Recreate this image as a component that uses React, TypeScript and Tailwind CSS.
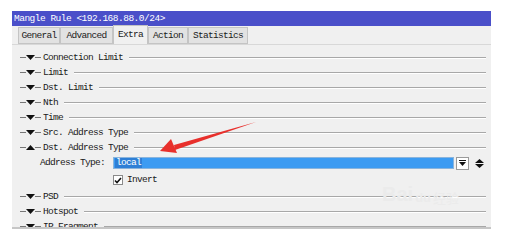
import React from "react";

const mono = { fontFamily: '"Liberation Mono", "DejaVu Sans Mono", monospace' };

const Tri = ({ up = false }: { up?: boolean }) => (
  <svg width="9" height="5" viewBox="0 0 9 5" className="block">
    {up ? <polygon points="0,5 9,5 4.5,0" fill="#111" /> : <polygon points="0,0 9,0 4.5,5" fill="#111" />}
  </svg>
);

const Section = ({ label, up = false }: { label: string; up?: boolean }) => (
  <div className="shrink-0 flex items-center h-[15px] pl-[8px] pr-[5px]">
    <div className="w-[6px] h-px bg-[#777]" />
    <Tri up={up} />
    <div className="w-[6px] h-px bg-[#777]" />
    <span className="ml-[2px] text-[9.5px] tracking-[-0.7px] text-[#1a1a1a] leading-none whitespace-nowrap">{label}</span>
    <div className="flex-1 ml-[6px] border-t border-t-[#a8a8a8] border-b border-b-white" />
  </div>
);

const tabs = [
  { name: "General", w: "w-[42px]" },
  { name: "Advanced", w: "w-[53px]" },
  { name: "Extra", w: "w-[35px]", active: true },
  { name: "Action", w: "w-[40px]" },
  { name: "Statistics", w: "w-[60px]" },
];

export default function App() {
  return (
    <div className="relative w-[507px] h-[244px] bg-white overflow-hidden" style={mono}>
      <div className="ml-[12px] mt-[11px] w-[479px] h-[218px] bg-[#f0f0f0] border-b-2 border-b-[#c6c6c6] flex flex-col overflow-hidden">
        <div className="shrink-0 h-[15px] bg-[#4a4fc9] flex items-center pl-[2px] text-white text-[9.5px] tracking-[-0.5px] leading-none">
          Mangle Rule &lt;192.168.88.0/24&gt;
        </div>
        <div className="shrink-0 h-[19px] flex items-end pl-[6px] border-b border-b-[#d8d8d8]">
          {tabs.map((t) => (
            <div
              key={t.name}
              className={`${t.w} flex items-center justify-center text-[9.5px] tracking-[-0.7px] leading-none text-[#1a1a1a] border border-[#c4c4c4] ${
                t.active ? "h-[19px] bg-[#f0f0f0] border-b-0" : "h-[17px] bg-[#e2e2e2]"
              }`}
            >
              {t.name}
            </div>
          ))}
        </div>
        <div className="shrink-0 pt-[5px] flex flex-col">
          <Section label="Connection Limit" />
          <Section label="Limit" />
          <Section label="Dst. Limit" />
          <Section label="Nth" />
          <Section label="Time" />
          <Section label="Src. Address Type" />
          <Section label="Dst. Address Type" up />
          <div className="shrink-0 flex items-center h-[16px] pl-[28px] pr-[7px]">
            <span className="w-[73px] text-[9.5px] tracking-[-0.7px] leading-none text-[#1a1a1a]">Address Type:</span>
            <div className="flex-1 h-[12px] bg-[#3c9bf2] border border-[#8ab4dc] flex items-center pl-[1px]">
              <span className="text-[9.5px] tracking-[-0.7px] leading-none text-white bg-[#2e7fd6] px-[1px]">local</span>
            </div>
            <div className="ml-[2px] w-[13px] h-[13px] bg-white border border-[#9a9a9a] flex items-center justify-center">
              <svg width="7" height="7" viewBox="0 0 7 7">
                <rect x="0" y="0" width="7" height="1" fill="#111" />
                <polygon points="0,2 7,2 3.5,6" fill="#111" />
              </svg>
            </div>
            <div className="ml-[6px] flex flex-col items-center gap-[1px]">
              <svg width="9" height="4" viewBox="0 0 9 4"><polygon points="0,4 9,4 4.5,0" fill="#111" /></svg>
              <svg width="9" height="4" viewBox="0 0 9 4"><polygon points="0,0 9,0 4.5,4" fill="#111" /></svg>
            </div>
          </div>
          <div className="shrink-0 flex items-center h-[18px] pl-[101px]">
            <div className="w-[10px] h-[10px] bg-white border border-[#8a8a8a] flex items-center justify-center">
              <svg width="8" height="7" viewBox="0 0 8 7">
                <path d="M1 3.5 L3 5.5 L7 1" stroke="#111" strokeWidth="1.6" fill="none" />
              </svg>
            </div>
            <span className="ml-[4px] text-[9.5px] tracking-[-0.7px] leading-none text-[#1a1a1a]">Invert</span>
          </div>
          <Section label="PSD" />
          <Section label="Hotspot" />
          <Section label="IP Fragment" />
        </div>
      </div>

      <div className="absolute left-[382px] top-[184px] flex items-end text-[#ebebeb] leading-none select-none" style={{ fontFamily: '"Liberation Sans", sans-serif' }}>
        <span className="text-[20px] font-bold">Bai</span>
        <span className="text-[13px] font-bold ml-[2px]">du</span>
        <span className="text-[13px] ml-[2px]" style={{ fontFamily: '"Noto Sans CJK SC", sans-serif' }}>经验</span>
      </div>

      <svg className="absolute left-0 top-0 pointer-events-none" width="507" height="244">
        <path d="M256 122 L174 145 L175 150 Z" fill="#e8302c" />
        <polygon points="160,151 171,139 177,153" fill="#e8302c" />
      </svg>
    </div>
  );
}
